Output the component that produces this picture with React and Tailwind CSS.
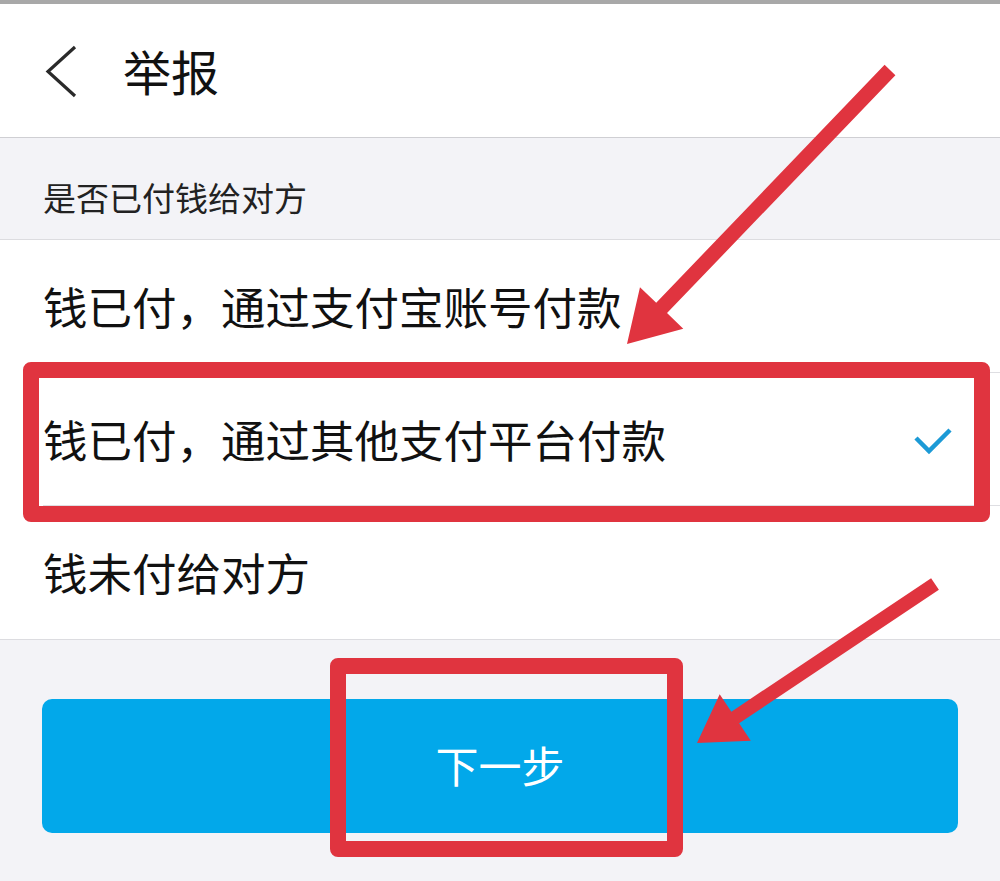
import React from "react";

const font = { fontFamily: '"Noto Sans CJK SC", "Noto Sans", sans-serif' };

function Row({ text, checked, divider }) {
  return (
    <div className="relative h-[133px] bg-white flex items-center pl-[43px] pr-[48px]">
      <span className="text-[44.5px] leading-none text-[#111]">{text}</span>
      {checked && (
        <svg className="ml-auto" width="40" height="30" viewBox="0 0 40 30">
          <polyline points="4,13 17,26 38,5" fill="none" stroke="#1c9ad6" strokeWidth="4.5" strokeLinecap="butt" strokeLinejoin="miter" />
        </svg>
      )}
      {divider && <div className="absolute left-[43px] right-0 bottom-0 h-px bg-[#dedee2]" />}
    </div>
  );
}

function Arrow({ x1, y1, x2, y2, w = 14, headLen = 52, headW = 54 }) {
  const dx = x2 - x1;
  const dy = y2 - y1;
  const len = Math.hypot(dx, dy);
  const ux = dx / len;
  const uy = dy / len;
  const px = -uy;
  const py = ux;
  const bx = x2 - ux * headLen;
  const by = y2 - uy * headLen;
  const pts = [
    [x1 + px * w / 2, y1 + py * w / 2],
    [bx + px * w / 2, by + py * w / 2],
    [bx + px * headW / 2, by + py * headW / 2],
    [x2, y2],
    [bx - px * headW / 2, by - py * headW / 2],
    [bx - px * w / 2, by - py * w / 2],
    [x1 - px * w / 2, y1 - py * w / 2],
  ]
    .map((p) => p.join(","))
    .join(" ");
  return <polygon points={pts} fill="#e0343f" />;
}

export default function App() {
  return (
    <div className="relative w-[1000px] h-[881px] bg-[#f3f3f7] overflow-hidden" style={font}>
      <div className="h-[4px] bg-[#a8a8a8]" />
      <div className="h-[134px] bg-white border-b border-[#cfcfd3] flex items-center">
        <svg className="ml-[42px]" width="40" height="56" viewBox="0 0 40 56">
          <polyline points="33,4 6,28.5 33,53" fill="none" stroke="#2a2a2a" strokeWidth="3.2" />
        </svg>
        <span className="ml-[41px] text-[48px] leading-none text-[#111] mt-[-2px]">举报</span>
      </div>
      <div className="h-[101px] flex items-end pb-[25px] pl-[43px]">
        <span className="text-[33px] leading-none text-[#222]">是否已付钱给对方</span>
      </div>
      <div className="border-t border-b border-[#dcdce0]">
        <Row text="钱已付，通过支付宝账号付款" divider />
        <Row text="钱已付，通过其他支付平台付款" checked divider />
        <Row text="钱未付给对方" />
      </div>
      <div className="pt-[59px] px-[42px]">
        <button className="w-full h-[134px] rounded-[10px] bg-[#02a8ea] flex items-center justify-center">
          <span className="text-[43px] leading-none text-white mt-[-4px]">下一步</span>
        </button>
      </div>

      {/* annotation boxes */}
      <div className="absolute left-[23px] top-[362px] w-[967px] h-[160px] border-[16px] border-[#e0343f] rounded-[8px]" />
      <div className="absolute left-[330px] top-[658px] w-[353px] h-[199px] border-[16px] border-[#e0343f] rounded-[8px]" />

      <svg className="absolute left-0 top-0 pointer-events-none" width="1000" height="881" viewBox="0 0 1000 881">
        <Arrow x1={890} y1={70} x2={627} y2={344} w={15} headLen={50} headW={60} />
        <Arrow x1={935} y1={584} x2={697} y2={743} w={14} headLen={46} headW={56} />
      </svg>
    </div>
  );
}
